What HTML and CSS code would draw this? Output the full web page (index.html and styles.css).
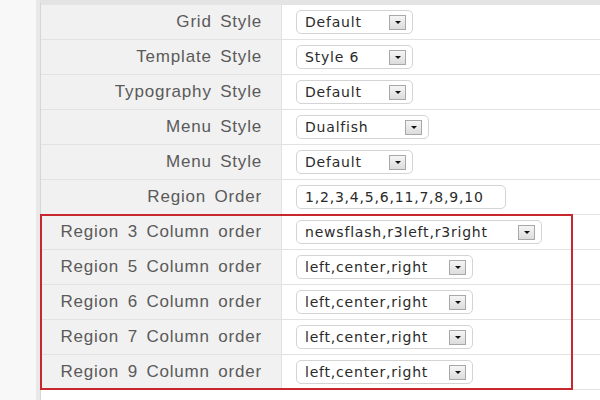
FILE: index.html
```html
<!DOCTYPE html>
<html lang="en">

<head>
    <meta charset="UTF-8">
    <title>Layout Settings</title>
    <link rel="stylesheet" href="styles.css">
</head>

<body>
    <div class="page">
        <div class="sidebar"></div>

        <div class="panel">
            <div class="row">
                <div class="label">Grid Style</div>
                <div class="value">
                    <div class="select w-sm"><span>Default</span><i class="arrow"></i></div>
                </div>
            </div>
            <div class="row">
                <div class="label">Template Style</div>
                <div class="value">
                    <div class="select w-sm"><span>Style 6</span><i class="arrow"></i></div>
                </div>
            </div>
            <div class="row">
                <div class="label">Typography Style</div>
                <div class="value">
                    <div class="select w-sm"><span>Default</span><i class="arrow"></i></div>
                </div>
            </div>
            <div class="row">
                <div class="label">Menu Style</div>
                <div class="value">
                    <div class="select w-md"><span>Dualfish</span><i class="arrow"></i></div>
                </div>
            </div>
            <div class="row">
                <div class="label">Menu Style</div>
                <div class="value">
                    <div class="select w-sm"><span>Default</span><i class="arrow"></i></div>
                </div>
            </div>
            <div class="row">
                <div class="label">Region Order</div>
                <div class="value">
                    <div class="text-input">1,2,3,4,5,6,11,7,8,9,10</div>
                </div>
            </div>

            <!-- highlighted group -->
            <div class="highlight">
                <div class="row">
                    <div class="label">Region 3 Column order</div>
                    <div class="value">
                        <div class="select w-xl"><span>newsflash,r3left,r3right</span><i class="arrow"></i></div>
                    </div>
                </div>
                <div class="row">
                    <div class="label">Region 5 Column order</div>
                    <div class="value">
                        <div class="select w-lg"><span>left,center,right</span><i class="arrow"></i></div>
                    </div>
                </div>
                <div class="row">
                    <div class="label">Region 6 Column order</div>
                    <div class="value">
                        <div class="select w-lg"><span>left,center,right</span><i class="arrow"></i></div>
                    </div>
                </div>
                <div class="row">
                    <div class="label">Region 7 Column order</div>
                    <div class="value">
                        <div class="select w-lg"><span>left,center,right</span><i class="arrow"></i></div>
                    </div>
                </div>
                <div class="row">
                    <div class="label">Region 9 Column order</div>
                    <div class="value">
                        <div class="select w-lg"><span>left,center,right</span><i class="arrow"></i></div>
                    </div>
                </div>
            </div>
        </div>
    </div>
</body>

</html>
```

FILE: styles.css
```css
body {
    margin: 0;
    background: #fff;
    font-family: "Liberation Sans", Arial, sans-serif;
}

.page {
    display: flex;
    height: 400px;
    overflow: hidden;
}

.sidebar {
    width: 36px;
    background: #f8f8f8;
    border-right: 4px solid #e9e9e9;
}

.panel {
    flex: 1;
    border-left: 1px solid #d6d6d6;
    border-top: 5px solid #e4e4e4;
    display: flex;
    flex-direction: column;
}

.row {
    display: flex;
    height: 35px;
    box-sizing: border-box;
    border-bottom: 1px solid #e2e2e2;
}

.label {
    width: 241px;
    box-sizing: border-box;
    background: #f1f1f1;
    border-right: 1px solid #e2e2e2;
    padding-right: 19px;
    display: flex;
    align-items: center;
    justify-content: flex-end;
    font-size: 17px;
    letter-spacing: 0.8px;
    word-spacing: 3px;
    color: #5a5a5a;
}

.value {
    flex: 1;
    display: flex;
    align-items: center;
    padding-left: 14px;
}

.select,
.text-input {
    height: 24px;
    box-sizing: border-box;
    border: 1px solid #d4d4d4;
    border-radius: 5px;
    background: #fff;
    display: flex;
    align-items: center;
    padding: 0 6px 0 8px;
    font-family: "DejaVu Sans", Verdana, sans-serif;
    font-size: 14px;
    letter-spacing: 0.8px;
    color: #2a2a2a;
    white-space: nowrap;
}

.w-sm { width: 117px; }
.w-md { width: 133px; }
.w-lg { width: 177px; }
.w-xl { width: 246px; }

.text-input {
    width: 210px;
}

.arrow {
    margin-left: auto;
    width: 17px;
    height: 15px;
    box-sizing: border-box;
    border: 1px solid #a8a8a8;
    background: linear-gradient(#f5f5f5, #dcdcdc);
    display: flex;
    align-items: center;
    justify-content: center;
}

.arrow::before {
    content: "";
    border-left: 3px solid transparent;
    border-right: 3px solid transparent;
    border-top: 3px solid #111;
}

/* red annotation frame around the region rows */
.highlight {
    position: relative;
}

.highlight::after {
    content: "";
    position: absolute;
    left: -1px;
    top: -1px;
    width: 533px;
    height: calc(100% + 1px);
    box-sizing: border-box;
    border: 2px solid #c8282d;
    pointer-events: none;
}
```
